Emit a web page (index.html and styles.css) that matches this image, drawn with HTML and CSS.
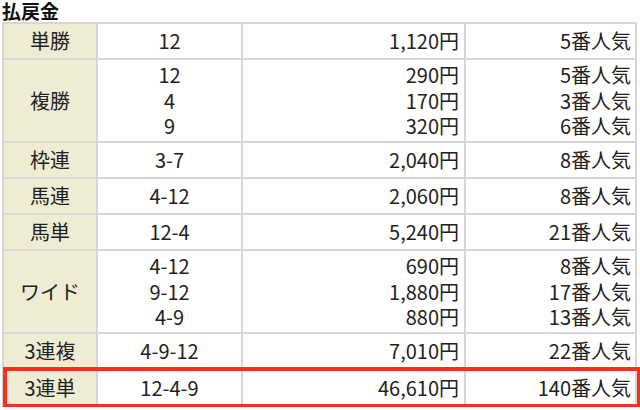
FILE: index.html
```html
<!DOCTYPE html>
<html lang="ja">
<head>
<meta charset="utf-8">
<link rel="stylesheet" href="styles.css">
</head>
<body>
<div class="page">
  <h2 class="title">払戻金</h2>
  <div class="wrap">
    <table class="pay">
      <tbody>
        <tr class="one"><th class="kind">単勝</th><td class="num">12</td><td class="yen">1,120円</td><td class="pop">5番人気</td></tr>
        <tr class="three"><th class="kind">複勝</th><td class="num">12<br>4<br>9</td><td class="yen">290円<br>170円<br>320円</td><td class="pop">5番人気<br>3番人気<br>6番人気</td></tr>
        <tr class="one"><th class="kind">枠連</th><td class="num">3-7</td><td class="yen">2,040円</td><td class="pop">8番人気</td></tr>
        <tr class="one"><th class="kind">馬連</th><td class="num">4-12</td><td class="yen">2,060円</td><td class="pop">8番人気</td></tr>
        <tr class="one"><th class="kind">馬単</th><td class="num">12-4</td><td class="yen">5,240円</td><td class="pop">21番人気</td></tr>
        <tr class="three"><th class="kind">ワイド</th><td class="num">4-12<br>9-12<br>4-9</td><td class="yen">690円<br>1,880円<br>880円</td><td class="pop">8番人気<br>17番人気<br>13番人気</td></tr>
        <tr class="one"><th class="kind">3連複</th><td class="num">4-9-12</td><td class="yen">7,010円</td><td class="pop">22番人気</td></tr>
        <tr class="last"><th class="kind">3連単</th><td class="num">12-4-9</td><td class="yen">46,610円</td><td class="pop">140番人気</td></tr>
      </tbody>
    </table>
    <div class="mark"></div>
  </div>
</div>
</body>
</html>
```

FILE: styles.css
```css
html, body {
  margin: 0;
  padding: 0;
  background: #ffffff;
}
body {
  font-family: "Noto Sans CJK JP", "Noto Sans", sans-serif;
  color: #222222;
  overflow: hidden;
}
.page {
  padding-left: 2px;
}
.title {
  margin: 0;
  font-size: 19px;
  font-weight: bold;
  line-height: 22px;
  color: #111111;
}
.wrap {
  position: relative;
}
.pay {
  border-collapse: separate;
  border-spacing: 0;
  table-layout: fixed;
  width: 635px;
  border-top: 2px solid #d6d6d6;
  border-left: 2px solid #d6d6d6;
  font-size: 20px;
  line-height: 25.5px;
}
.pay th, .pay td {
  box-sizing: border-box;
  border-right: 2px solid #d6d6d6;
  border-bottom: 2px solid #d6d6d6;
  padding: 0;
  vertical-align: middle;
  font-weight: normal;
}
.pay .kind {
  width: 94px;
  background: #eeecd3;
  text-align: center;
}
.pay .num {
  width: 145px;
  text-align: center;
}
.pay .yen {
  width: 223px;
  text-align: right;
  padding-right: 5px;
}
.pay .pop {
  width: 171px;
  text-align: right;
  padding-right: 4px;
}
.pay tr.one th, .pay tr.one td {
  height: 36px;
}
.pay tr.three th, .pay tr.three td {
  height: 83px;
}
.pay tr.last th, .pay tr.last td {
  height: 37px;
}
.mark {
  position: absolute;
  left: 1px;
  top: 345px;
  width: 638px;
  height: 41px;
  box-sizing: border-box;
  border: 4px solid #f4311c;
}
```
